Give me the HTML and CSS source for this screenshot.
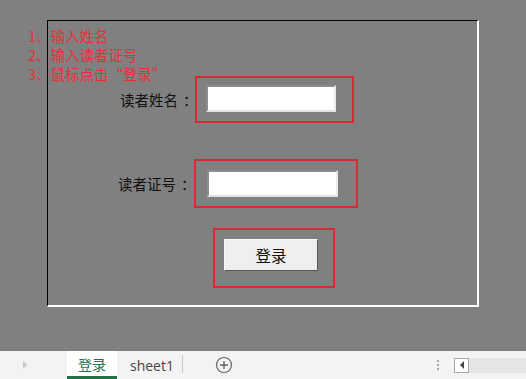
FILE: index.html
```html
<!DOCTYPE html>
<html lang="zh-CN">
<head>
    <meta charset="UTF-8">
    <title>读者登录</title>
    <link rel="stylesheet" href="styles.css">
</head>
<body>
    <div class="sheet">
        <div class="notes">
            <div>1、输入姓名</div>
            <div>2、输入读者证号</div>
            <div>3、鼠标点击“登录”</div>
        </div>
        <div class="frame">
            <div class="row row-name">
                <span class="label">读者姓名<span class="colon">：</span></span>
                <div class="mark mark-name">
                    <input class="field" type="text">
                </div>
            </div>
            <div class="row row-card">
                <span class="label">读者证号<span class="colon">：</span></span>
                <div class="mark mark-card">
                    <input class="field" type="text">
                </div>
            </div>
            <div class="row row-login">
                <div class="mark mark-login">
                    <button class="login" type="button">登录</button>
                </div>
            </div>
        </div>
    </div>

    <div class="tabbar">
        <div class="nav">
            <svg width="6" height="8" viewBox="0 0 6 8"><path d="M1 0 L5 4 L1 8 Z" fill="#c8c8c8"/></svg>
        </div>
        <div class="tab active">登录</div>
        <div class="tab sheet1">sheet1</div>
        <div class="sep"></div>
        <div class="add">
            <svg width="18" height="18" viewBox="0 0 18 18">
                <circle cx="9" cy="9" r="7.5" fill="none" stroke="#666" stroke-width="1.2"/>
                <path d="M9 5 V13 M5 9 H13" stroke="#666" stroke-width="1.4"/>
            </svg>
        </div>
        <div class="spacer"></div>
        <div class="dots"><i></i><i></i><i></i></div>
        <div class="scroll">
            <div class="scroll-btn">
                <svg width="6" height="8" viewBox="0 0 6 8"><path d="M5 0 L1 4 L5 8 Z" fill="#444"/></svg>
            </div>
            <div class="track"></div>
        </div>
    </div>
</body>
</html>
```

FILE: styles.css
```css
body {
    margin: 0;
    background: #808080;
    font-family: "Noto Sans CJK SC", "Noto Sans", sans-serif;
}
.sheet {
    position: relative;
    height: 351px;
    padding-top: 20px;
    box-sizing: border-box;
}
.notes {
    position: absolute;
    left: 28px;
    top: 26px;
    color: #e8303a;
    font-size: 14.5px;
    line-height: 19px;
}
.frame {
    margin-left: 47px;
    width: 432px;
    height: 287px;
    box-sizing: border-box;
    border-top: 1px solid #000;
    border-left: 1px solid #000;
    border-right: 2px solid #fff;
    border-bottom: 2px solid #fff;
}
.row {
    display: flex;
    align-items: center;
}
.label {
    font-size: 14.5px;
    color: #111;
    width: 70px;
    white-space: nowrap;
}
.colon {
    margin-left: 5px;
    margin-right: -5px;
}
.row-name {
    margin-top: 55px;
    padding-left: 72px;
    gap: 5px;
}
.row-card {
    margin-top: 36px;
    padding-left: 70px;
    gap: 6px;
}
.row-login {
    margin-top: 20px;
    padding-left: 165px;
}
.mark {
    border: 2px solid #dc2832;
    box-sizing: border-box;
}
.mark-name {
    width: 159px;
    height: 47px;
    padding: 7px 0 0 9px;
}
.mark-card {
    width: 164px;
    height: 49px;
    padding: 9px 0 0 11px;
}
.mark-login {
    width: 122px;
    height: 60px;
    padding: 9px 0 0 9px;
}
.field {
    display: block;
    margin: 0;
    width: 130px;
    height: 27px;
    box-sizing: border-box;
    background: #fff;
    border: 2px solid;
    border-color: #8c8c8c #eaeaea #e2e2e2 #8c8c8c;
    outline: none;
}
.mark-card .field {
    width: 131px;
}
.login {
    display: block;
    width: 94px;
    height: 32px;
    margin: 0;
    padding: 0;
    background: #efefef;
    border: 1px solid;
    border-color: #fafafa #5a5a5a #5a5a5a #fafafa;
    font-family: "Noto Sans CJK SC", sans-serif;
    font-size: 15.5px;
    color: #111;
}
.tabbar {
    display: flex;
    align-items: stretch;
    height: 28px;
    background: #f3f3f3;
    font-family: "Open Sans", "Noto Sans CJK SC", sans-serif;
    font-size: 14px;
    color: #444;
}
.nav {
    width: 67px;
    display: flex;
    align-items: center;
    padding-left: 22px;
    box-sizing: border-box;
}
.tab {
    display: flex;
    align-items: center;
    padding: 0 13px;
    box-sizing: border-box;
}
.tab.sheet1 {
    padding-right: 8px;
}
.tab.active {
    width: 50px;
    justify-content: center;
    padding: 0;
    background: #fff;
    color: #217346;
    border-bottom: 3px solid #217346;
    font-family: "Noto Sans CJK SC", sans-serif;
}
.sep {
    width: 1px;
    background: #c8c8c8;
    margin: 4px 0 6px;
}
.add {
    display: flex;
    align-items: center;
    margin-left: 32px;
}
.spacer {
    flex: 1;
}
.dots {
    display: flex;
    flex-direction: column;
    justify-content: center;
    gap: 2px;
    margin-right: 15px;
}
.dots i {
    width: 2px;
    height: 2px;
    background: #aaa;
}
.scroll {
    display: flex;
    align-items: center;
}
.scroll-btn {
    width: 15px;
    height: 15px;
    box-sizing: border-box;
    border: 1px solid #a8a8a8;
    background: #fff;
    display: flex;
    align-items: center;
    justify-content: center;
}
.track {
    width: 57px;
    height: 15px;
    background: #e6e6e6;
}
```
